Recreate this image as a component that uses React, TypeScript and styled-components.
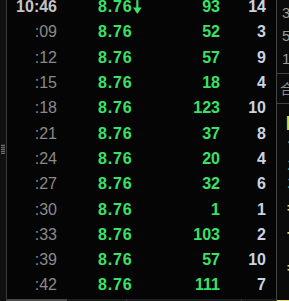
import React from 'react';
import styled, { createGlobalStyle } from 'styled-components';

const GlobalStyle = createGlobalStyle`
  html, body, #root {
    margin: 0;
    padding: 0;
    height: 100%;
    background: #060606;
    overflow: hidden;
  }
`;

const Screen = styled.div`
  display: flex;
  height: 301px;
  width: 289px;
  font-family: "Liberation Sans", Arial, sans-serif;
`;

const SideStrip = styled.div`
  width: 6px;
  background: #101010;
  border-right: 1px solid #3a3a3a;
  display: flex;
  align-items: center;
  justify-content: center;
`;

const Grip = styled.div`
  width: 4px;
  height: 10px;
  margin-top: -4px;
  background: repeating-linear-gradient(
    0deg,
    #6a6a6a 0px,
    #6a6a6a 1px,
    #2a2a2a 1px,
    #2a2a2a 2px
  );
`;

const Tape = styled.div`
  width: 269px;
  display: flex;
  flex-direction: column;
  background: #050505;
`;

const RowArea = styled.div`
  flex: 1;
  overflow: hidden;
`;

const RowList = styled.div`
  margin-top: -6px;
`;

const Row = styled.div`
  display: grid;
  grid-template-columns: 50px 85px 78px 46px;
  height: 25.3px;
  align-items: center;
  font-size: 16px;
  line-height: 25px;
`;

const Time = styled.span<{ $head?: boolean }>`
  text-align: right;
  color: ${(p) => (p.$head ? '#c4c4c4' : '#8a8a8a')};
  font-weight: ${(p) => (p.$head ? 700 : 400)};
`;

const Price = styled.span`
  display: flex;
  align-items: center;
  padding-left: 41px;
  color: #3ae266;
  font-weight: 700;
  letter-spacing: 0.8px;
`;

const Volume = styled.span`
  text-align: right;
  color: #3ae266;
  font-weight: 700;
`;

const Count = styled.span`
  text-align: right;
  color: #cbd3e2;
  font-weight: 700;
`;

const ScrollBar = styled.div`
  height: 2px;
  display: grid;
  grid-template-columns: 60px 59px 1px 114px 1px 1fr;
  background: #1c1c1c;
`;

const ScrollPart = styled.div<{ $tone: string }>`
  background: ${(p) => p.$tone};
`;

const SidePanel = styled.div`
  flex: 1;
  border-left: 1px solid #444;
  background: #0a0a0a;
  display: flex;
  flex-direction: column;
  overflow: hidden;
  font-size: 15px;
`;

const QuoteBox = styled.div`
  padding: 1px 0 0 5px;
  color: #9a9a9a;
  line-height: 23px;
  height: 72px;
  border-bottom: 1px solid #444;
`;

const TabBox = styled.div`
  height: 29px;
  line-height: 29px;
  padding-left: 3px;
  color: #8e8e8e;
  white-space: nowrap;
  border-bottom: 1px solid #444;
  font-family: "Noto Sans CJK SC", sans-serif;
  font-size: 14px;
`;

const NewsList = styled.div`
  flex: 1;
  padding: 6px 0 0 10px;
  display: flex;
  flex-direction: column;
  border-bottom: 1px solid #e8e070;
`;

const NewsLine = styled.div<{ $color: string; $h: number }>`
  height: ${(p) => p.$h}px;
  line-height: ${(p) => p.$h}px;
  color: ${(p) => p.$color};
  white-space: nowrap;
  font-weight: 700;
  font-family: "Noto Sans CJK SC", sans-serif;
  font-size: 14px;
`;

type Trade = { t: string; p: string; v: number; c: number };

const trades: Trade[] = [
  { t: '10:46', p: '8.76', v: 93, c: 14 },
  { t: ':09', p: '8.76', v: 52, c: 3 },
  { t: ':12', p: '8.76', v: 57, c: 9 },
  { t: ':15', p: '8.76', v: 18, c: 4 },
  { t: ':18', p: '8.76', v: 123, c: 10 },
  { t: ':21', p: '8.76', v: 37, c: 8 },
  { t: ':24', p: '8.76', v: 20, c: 4 },
  { t: ':27', p: '8.76', v: 32, c: 6 },
  { t: ':30', p: '8.76', v: 1, c: 1 },
  { t: ':33', p: '8.76', v: 103, c: 2 },
  { t: ':39', p: '8.76', v: 57, c: 10 },
  { t: ':42', p: '8.76', v: 111, c: 7 },
];

const news = [
  { text: '▌', color: '#c8e040', h: 24 },
  { text: 'ア', color: '#e8e0a0', h: 24 },
  { text: '1', color: '#3aa8a0', h: 12 },
  { text: '1', color: '#3aa8a0', h: 24 },
  { text: '=', color: '#e0d060', h: 26 },
  { text: 'T', color: '#e0d060', h: 34 },
  { text: '=', color: '#e0d060', h: 26 },
];

const DownArrow = () => (
  <svg width="10" height="16" viewBox="0 0 10 16" style={{ marginLeft: 1, marginTop: 1 }}>
    <path d="M5 0 V11" stroke="#3ae266" strokeWidth="2.4" />
    <path d="M0 8.5 L5 16 L10 8.5 Z" fill="#3ae266" />
  </svg>
);

export default function App() {
  return (
    <>
      <GlobalStyle />
      <Screen>
        <SideStrip>
          <Grip />
        </SideStrip>
        <Tape>
          <RowArea>
            <RowList>
              {trades.map((tr, i) => (
                <Row key={tr.t}>
                  <Time $head={i === 0}>{tr.t}</Time>
                  <Price>
                    {tr.p}
                    {i === 0 && <DownArrow />}
                  </Price>
                  <Volume>{tr.v}</Volume>
                  <Count>{tr.c}</Count>
                </Row>
              ))}
            </RowList>
          </RowArea>
          <ScrollBar>
            <ScrollPart $tone="#4a4a4a" />
            <ScrollPart $tone="#1c1c1c" />
            <ScrollPart $tone="#3a3a3a" />
            <ScrollPart $tone="#1c1c1c" />
            <ScrollPart $tone="#3a3a3a" />
            <ScrollPart $tone="#1c1c1c" />
          </ScrollBar>
        </Tape>
        <SidePanel>
          <QuoteBox>
            <div>3</div>
            <div>5</div>
            <div>1</div>
          </QuoteBox>
          <TabBox>合计</TabBox>
          <NewsList>
            {news.map((n, i) => (
              <NewsLine key={i} $color={n.color} $h={n.h}>
                {n.text}
              </NewsLine>
            ))}
          </NewsList>
        </SidePanel>
      </Screen>
    </>
  );
}
